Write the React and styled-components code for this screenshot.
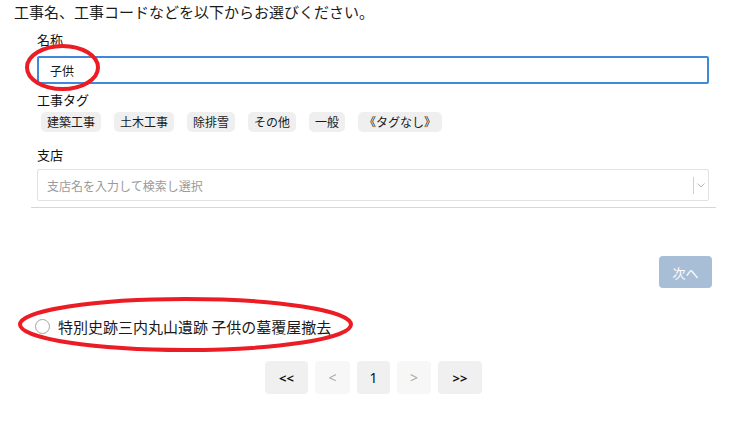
import React from "react";
import styled, { createGlobalStyle } from "styled-components";

const GlobalStyle = createGlobalStyle`
  html, body { margin: 0; padding: 0; background: #fff; }
  body {
    font-family: "Noto Sans CJK JP", "Noto Sans", sans-serif;
    color: #1a1a1a;
  }
  * { box-sizing: border-box; }
`;

const Page = styled.div`
  position: relative;
  width: 746px;
  height: 431px;
  overflow: hidden;
`;

const Title = styled.p`
  margin: 0;
  padding: 1px 0 0 14px;
  font-size: 15px;
  line-height: 22px;
`;

const Form = styled.div`
  margin: 8px 30px 0 31px;
  padding: 0 7px 6px 6px;
  border-bottom: 1px solid #d6d6d6;
`;

const Label = styled.div`
  font-size: 13px;
  line-height: 18px;
  margin-top: ${(p) => p.$mt || 0}px;
  margin-bottom: ${(p) => p.$mb || 0}px;
  color: #111;
`;

const TextInput = styled.div`
  height: 28px;
  border: 2px solid #3f89da;
  border-radius: 2px;
  display: flex;
  align-items: center;
  padding-left: 11px;
  font-size: 12px;
`;

const Tags = styled.div`
  display: flex;
  gap: 13px;
  padding-left: 4px;
`;

const Tag = styled.span`
  height: 20px;
  padding: 0 6px;
  border-radius: 5px;
  background: #efefef;
  font-size: 12px;
  line-height: 20px;
`;

const Select = styled.div`
  height: 32px;
  border: 1px solid #e2e2e2;
  border-radius: 2px;
  display: flex;
  align-items: center;
  padding-left: 9px;
`;

const Placeholder = styled.span`
  flex: 1;
  font-size: 12px;
  color: #9a9a9a;
`;

const Separator = styled.span`
  width: 1px;
  height: 17px;
  background: #d0d0d0;
`;

const Chevron = styled.span`
  width: 14px;
  display: flex;
  justify-content: center;
`;

const Actions = styled.div`
  display: flex;
  justify-content: flex-end;
  padding-right: 34px;
  margin-top: 48px;
`;

const NextButton = styled.button`
  width: 53px;
  height: 32px;
  border: none;
  border-radius: 4px;
  background: #a8bed7;
  color: #fff;
  font-family: inherit;
  font-size: 13px;
  padding: 0;
`;

const RadioRow = styled.label`
  display: flex;
  align-items: center;
  gap: 8px;
  padding-left: 35px;
  margin-top: 28px;
  height: 20px;
  font-size: 15px;
`;

const RadioCircle = styled.span`
  width: 15px;
  height: 15px;
  border-radius: 50%;
  border: 1.5px solid #a2a2a2;
  background: #fff;
`;

const Pagination = styled.div`
  display: flex;
  justify-content: center;
  gap: 7px;
  margin-top: 25px;
  padding-left: 1px;
`;

const PageButton = styled.button`
  width: ${(p) => p.$w}px;
  height: 33px;
  border: none;
  border-radius: 4px;
  padding: 0;
  background: ${(p) => (p.$disabled ? "#f7f7f7" : "#f0f0f0")};
  color: ${(p) => (p.$disabled ? "#a8a8a8" : "#111")};
  font-family: "Noto Sans", sans-serif;
  font-size: ${(p) => (p.$bold ? 13 : 14)}px;
  font-weight: ${(p) => (p.$bold ? 700 : 400)};
`;

const Annotation = styled.svg`
  position: absolute;
  left: 0;
  top: 0;
  pointer-events: none;
`;

const tags = ["建築工事", "土木工事", "除排雪", "その他", "一般", "《タグなし》"];

export default function App() {
  return (
    <Page>
      <GlobalStyle />
      <Title>工事名、工事コードなどを以下からお選びください。</Title>
      <Form>
        <Label $mb={7}>名称</Label>
        <TextInput>子供</TextInput>
        <Label $mt={7} $mb={3}>工事タグ</Label>
        <Tags>
          {tags.map((t) => (
            <Tag key={t}>{t}</Tag>
          ))}
        </Tags>
        <Label $mt={14} $mb={5}>支店</Label>
        <Select>
          <Placeholder>支店名を入力して検索し選択</Placeholder>
          <Separator />
          <Chevron>
            <svg width="8" height="5" viewBox="0 0 8 5">
              <path d="M0.5 0.5 L4 4 L7.5 0.5" fill="none" stroke="#b5b5b5" strokeWidth="1" />
            </svg>
          </Chevron>
        </Select>
      </Form>
      <Actions>
        <NextButton>次へ</NextButton>
      </Actions>
      <RadioRow>
        <RadioCircle />
        特別史跡三内丸山遺跡 子供の墓覆屋撤去
      </RadioRow>
      <Pagination>
        <PageButton $w={43} $bold>&lt;&lt;</PageButton>
        <PageButton $w={35} $disabled>&lt;</PageButton>
        <PageButton $w={33}>1</PageButton>
        <PageButton $w={34} $disabled>&gt;</PageButton>
        <PageButton $w={44} $bold>&gt;&gt;</PageButton>
      </Pagination>
      <Annotation width="746" height="431" viewBox="0 0 746 431">
        <ellipse cx="62.5" cy="67.5" rx="35.5" ry="21.5" fill="none" stroke="#ec1c24" strokeWidth="4" />
        <ellipse cx="185.5" cy="324.5" rx="165.5" ry="25.5" fill="none" stroke="#ec1c24" strokeWidth="4" />
      </Annotation>
    </Page>
  );
}
